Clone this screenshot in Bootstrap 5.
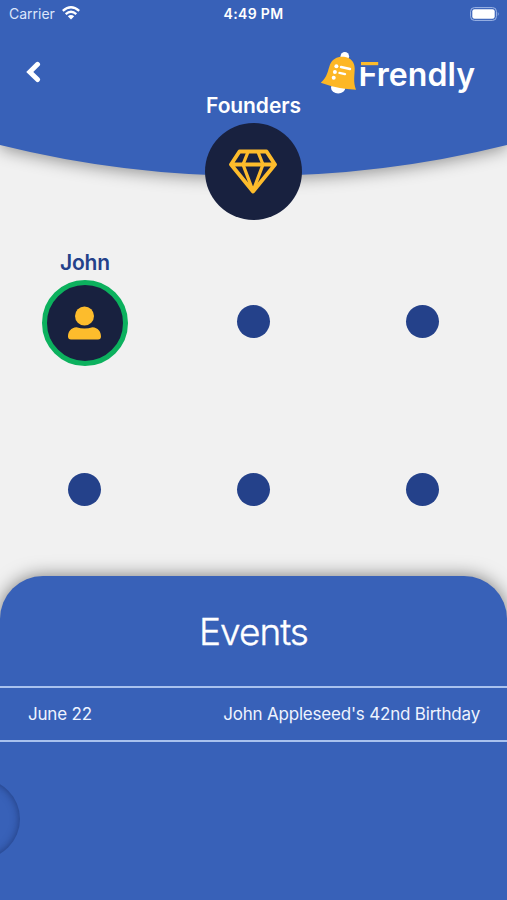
<!DOCTYPE html>
<html lang="en">
<head>
<meta charset="utf-8">
<meta name="viewport" content="width=device-width, initial-scale=1">
<title>Frendly</title>
<link href="https://cdn.jsdelivr.net/npm/bootstrap@5.3.0/dist/css/bootstrap.min.css" rel="stylesheet">
<style>
  :root { --blue: #3861b8; --navy: #18213f; --royal: #24418a; --gold: #fdbc2c; --green: #0cb15e; }
  body { font-family: Inter, "Liberation Sans", sans-serif; background: #f1f1f1; color: #fff; }
  svg { display: block; }
  .app-screen { height: 900px; }
  .app-header { height: 220px; }
  .header-curve { filter: drop-shadow(0 3px 8px rgba(0,0,0,.38)); }
  .status-bar { height: 28px; padding: 0 7px 0 9px; font-size: 14px; line-height: 28px; }
  .carrier { color: #dce6fb; }
  .wifi { margin: -2px 0 0 7px; }
  .clock { font-weight: 600; letter-spacing: .35px; padding-right: 2px; }
  .brand-bar { height: 65px; padding: 23px 31px 0 25px; }
  .back-icon { margin-top: 10px; }
  .founders-title { font-size: 21px; line-height: 26px; font-weight: 600; letter-spacing: -.1px; }
  .founder-disc { width: 97px; height: 97px; margin-top: 4px; padding: 0 2px 2px 0; background: var(--navy); }
  .seats { height: 356px; padding-top: 17px; }
  .seat { height: 168px; }
  .seat-dot { width: 33px; height: 33px; background: var(--royal); }
  .person-name { font-size: 21px; line-height: 26px; font-weight: 600; color: var(--royal); margin-top: 13px; padding-left: 1px; letter-spacing: -.2px; }
  .person-disc { width: 86px; height: 86px; margin-top: 4px; background: var(--navy); border: 5px solid var(--green); }
  .events-panel { background: var(--blue); border-radius: 43px 43px 0 0; box-shadow: 0 0 18px rgba(0,0,0,.5); }
  .events-title { font-size: 37px; line-height: 44px; font-weight: 300; letter-spacing: -1px; padding: 34px 0 32px; margin: 0; -webkit-text-stroke: .35px #fff; }
  .event-row { height: 56px; padding: 1px 27px 0 28px; font-size: 17px; letter-spacing: -.2px; border-top: 2px solid #a9c2ee; border-bottom: 2px solid #a9c2ee; color: #eef3ff; }
  .drawer-knob { width: 80px; height: 80px; left: -60px; top: 203px; box-shadow: inset 0 0 9px rgba(16,34,84,.6); }
</style>
</head>
<body>
<main class="app-screen d-flex flex-column position-relative overflow-hidden">
  <header class="app-header position-relative flex-shrink-0">
    <svg class="header-curve position-absolute top-0 start-0" width="507" height="220" viewBox="0 0 507 220"><path d="M-40 -40H547V134.200A1052 1052 0 0 1 -40 134.200Z" fill="#3861b8"/></svg>
    <div class="position-relative">
      <div class="status-bar row g-0">
        <div class="col d-flex align-items-center">
          <span class="carrier">Carrier</span>
          <svg class="wifi" width="18" height="14" viewBox="0 0 18 14" fill="none" stroke="#fff" stroke-width="2.300"><path d="M.8 4.900Q9-2.300 17.200 4.900M3.700 8.100Q9 3.300 14.300 8.100"/><path d="M9 13.500 5.800 10.200Q9 7.600 12.200 10.200Z" fill="#fff" stroke="none"/></svg>
        </div>
        <div class="col text-center clock">4:49 PM</div>
        <div class="col d-flex justify-content-end align-items-center">
          <svg width="30" height="14" viewBox="0 0 30 14"><rect x=".6" y=".6" width="25.800" height="12.800" rx="3.800" fill="none" stroke="#9fb7e6" stroke-width="1"/><rect x="2.300" y="2.300" width="22.400" height="9.400" rx="2.200" fill="#fff"/><path d="M27.800 4.700Q29.600 7 27.800 9.300Z" fill="#9fb7e6"/></svg>
        </div>
      </div>
      <div class="brand-bar d-flex justify-content-between align-items-start">
        <svg class="back-icon" width="17" height="22" viewBox="0 0 17 22"><path d="M12.600 3 4.400 11 12.600 19" fill="none" stroke="#fff" stroke-width="5.200" stroke-linecap="round" stroke-linejoin="miter" transform="translate(.6 .5) scale(.95)"/></svg>
        <svg width="156" height="46" viewBox="0 0 156 46" role="img" aria-label="Frendly">
          <circle cx="24.800" cy="5.300" r="4.300" fill="#fff"/>
          <ellipse cx="18.200" cy="36.500" rx="7.200" ry="6" fill="#fff"/>
          <path d="M24 5.800C30.500 6.400 34.700 11 34.700 17.500C34.700 24 33 31 36 38.700Q18 38 .8 31.700C7.500 26 8 19 10 13.500C12.500 7.500 18 5.200 24 5.800Z" fill="#fdb725"/>
          <g stroke="#fff" stroke-width="2.400" stroke-linecap="round"><path d="M21 16 30 18M19.500 21.900 25 23.100"/></g>
          <g fill="#fff"><circle cx="16.400" cy="15.200" r="2"/><circle cx="14.900" cy="21" r="2"/><circle cx="13.700" cy="26.800" r="2"/></g>
          <text x="38.500" y="34.700" font-family="Inter, sans-serif" font-size="32" font-weight="600" fill="#fff" textLength="116.500" lengthAdjust="spacing">Frendly</text>
          <path d="M39 9H60V16H39Z" fill="#3861b8"/>
          <path d="M41 11H58.200V14.200H41Z" fill="#fdbc2c"/>
        </svg>
      </div>
      <div class="d-flex flex-column align-items-center">
        <div class="founders-title">Founders</div>
        <div class="founder-disc rounded-circle d-flex justify-content-center align-items-center">
          <svg width="50" height="46" viewBox="0 0 50 46" fill="none" stroke="#fdbc2c" stroke-width="3.900" stroke-linejoin="round"><path d="M11.500 3.500H38.500L47 16.500 25 43.500 3 16.500ZM3 16.500H47"/><path d="M20 4 15 16.500 25 43 35 16.500 30 4" stroke-width="3.300"/></svg>
        </div>
      </div>
    </div>
  </header>

  <section class="seats flex-shrink-0">
    <div class="row g-0">
      <div class="col-4 seat d-flex flex-column align-items-center">
        <div class="person-name">John</div>
        <div class="person-disc rounded-circle d-flex justify-content-center align-items-center flex-shrink-0">
          <svg width="34" height="34" viewBox="0 0 34 34" fill="#fdbc2c"><circle cx="16.500" cy="10" r="9.500"/><path d="M8.500 21.200Q16.500 23.800 24.500 21.200C30 21.700 33 25.500 33 30.500Q33 33.500 30 33.500H3Q0 33.500 0 30.500C0 25.500 3 21.700 8.500 21.200Z"/></svg>
        </div>
      </div>
      <div class="col-4 seat d-flex justify-content-center align-items-center"><div class="seat-dot rounded-circle"></div></div>
      <div class="col-4 seat d-flex justify-content-center align-items-center"><div class="seat-dot rounded-circle"></div></div>
      <div class="col-4 seat d-flex justify-content-center align-items-center"><div class="seat-dot rounded-circle"></div></div>
      <div class="col-4 seat d-flex justify-content-center align-items-center"><div class="seat-dot rounded-circle"></div></div>
      <div class="col-4 seat d-flex justify-content-center align-items-center"><div class="seat-dot rounded-circle"></div></div>
    </div>
  </section>

  <section class="events-panel position-relative flex-grow-1">
    <h1 class="events-title text-center">Events</h1>
    <div class="event-row d-flex justify-content-between align-items-center">
      <span>June 22</span>
      <span>John Appleseed's 42nd Birthday</span>
    </div>
    <div class="drawer-knob position-absolute rounded-circle"></div>
  </section>
</main>
<script src="https://cdn.jsdelivr.net/npm/bootstrap@5.3.0/dist/js/bootstrap.bundle.min.js"></script>
</body>
</html>
